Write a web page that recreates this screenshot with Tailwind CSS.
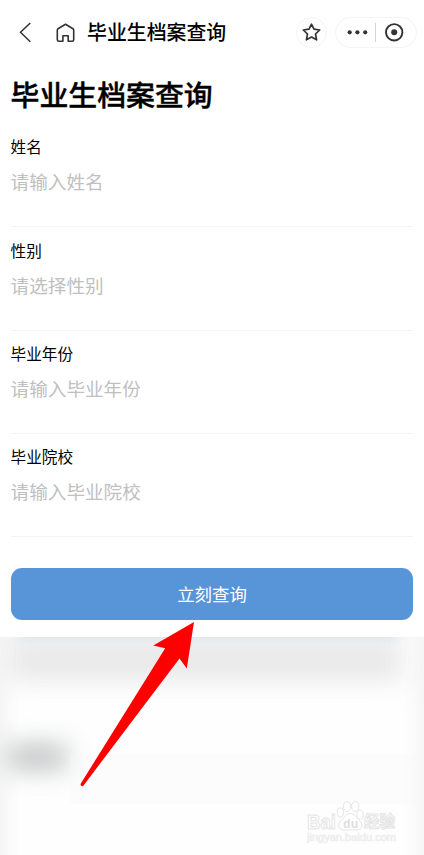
<!DOCTYPE html>
<html lang="zh-CN">
<head>
<meta charset="utf-8">
<title>毕业生档案查询</title>
<script src="https://cdn.jsdelivr.net/npm/@tailwindcss/browser@4"></script>
</head>
<body class="bg-white font-['Noto_Sans_CJK_SC',sans-serif]">
<div class="relative flex h-[855px] w-[424px] flex-col overflow-hidden bg-white text-black">
  <header class="flex h-16 shrink-0 items-center pl-[18px] pr-[7px]">
    <svg class="h-6 w-4 shrink-0" viewBox="0 0 16 24" fill="none" stroke="#333" stroke-width="1.5"><path d="M12.3 3 2.5 12.3 12.3 21.7"/></svg>
    <svg class="ml-[21px] h-6 w-[22px] shrink-0" viewBox="0 0 22 24" fill="none" stroke="#333" stroke-width="1.6" stroke-linejoin="round"><path d="M2.300 19.700V10.200Q2.300 9.300 3 8.700L10.500 4.300 18 8.700Q18.700 9.300 18.700 10.200V19.700Q18.700 21.200 17.200 21.200H13.200V15.700H7.900V21.200H3.800Q2.300 21.200 2.300 19.700Z"/></svg>
    <h1 class="ml-2.5 text-[19.900px] font-medium leading-none whitespace-nowrap">毕业生档案查询</h1>
    <div class="ml-auto flex size-[31px] shrink-0 items-center justify-center rounded-full border border-[#f4f4f4]">
      <svg class="size-5" viewBox="0 0 20 20" fill="none" stroke="#333" stroke-width="1.7" stroke-linejoin="round"><path d="M9.500 2.200 12 7.200 17.700 8 13.500 12 14.600 17.800 9.500 15 4.400 17.800 5.500 12 1.300 8 7 7.200Z"/></svg>
    </div>
    <div class="ml-2 flex h-[31px] w-[82px] shrink-0 items-center rounded-full border border-[#f4f4f4]">
      <svg class="h-5 w-[39px]" viewBox="0 0 39 20" fill="#333"><circle cx="13.700" cy="10.300" r="2.100"/><circle cx="21.400" cy="10.300" r="2.100"/><circle cx="29.200" cy="10.300" r="2.100"/></svg>
      <div class="h-[19px] w-px bg-[#d5d5d5]"></div>
      <svg class="ml-2 size-5" viewBox="0 0 20 20"><circle cx="10.200" cy="10.300" r="8.200" fill="none" stroke="#333" stroke-width="1.900"/><circle cx="10.200" cy="10.300" r="3" fill="#333"/></svg>
    </div>
  </header>

  <main class="h-[573px] shrink-0 px-[11px]">
    <h2 class="-ml-[0.500px] h-[60px] text-[28.900px] font-medium leading-[58px] whitespace-nowrap [-webkit-text-stroke:0.4px_#000]">毕业生档案查询</h2>
    <form>
      <div class="h-[103.300px] border-b border-[#f4f4f4] pt-2.5">
        <div class="-ml-[0.400px] text-[15.600px] leading-6">姓名</div>
        <div class="-ml-[0.400px] mt-2 text-[18.600px] leading-[30px] text-[#c0c0c0]">请输入姓名</div>
      </div>
      <div class="h-[103.300px] border-b border-[#f4f4f4] pt-[10.700px]">
        <div class="-ml-[0.400px] text-[15.600px] leading-6">性别</div>
        <div class="-ml-[0.400px] mt-2 text-[18.600px] leading-[30px] text-[#c0c0c0]">请选择性别</div>
      </div>
      <div class="h-[103.300px] border-b border-[#f4f4f4] pt-[10.400px]">
        <div class="-ml-[0.400px] text-[15.600px] leading-6">毕业年份</div>
        <div class="-ml-[0.400px] mt-2 text-[18.600px] leading-[30px] text-[#c0c0c0]">请输入毕业年份</div>
      </div>
      <div class="h-[103.300px] border-b border-[#f4f4f4] pt-[10.100px]">
        <div class="-ml-[0.400px] text-[15.600px] leading-6">毕业院校</div>
        <div class="-ml-[0.400px] mt-2 text-[18.600px] leading-[30px] text-[#c0c0c0]">请输入毕业院校</div>
      </div>
      <button type="button" class="mt-[31px] block h-[52px] w-full rounded-[11px] bg-[#5894d8] pb-px text-[17.400px] leading-[51px] text-white">立刻查询</button>
    </form>
  </main>

  <section class="relative h-[218px] shrink-0 overflow-hidden bg-[linear-gradient(to_right,#f6f6f6,#fefefe_20px,#fefefe_404px,#f6f6f6)]">
    <div class="absolute -top-8 left-0 h-[76px] w-[404px] bg-[#f0f0f0] blur-[13px]"></div>
    <div class="absolute top-[18px] left-5 h-[18px] w-[374px] bg-[#e4e4e4]/80 blur-[11px]"></div>
    <div class="absolute -top-2 left-5 h-2.5 w-[380px] bg-[#d9e3f0]/80 blur-[4px]"></div>
    <div class="absolute top-[108px] left-[7px] h-[24px] w-[60px] bg-[#bcc0c0] blur-[13px]"></div>
    <div class="absolute top-[117px] left-[70px] h-[50px] w-[354px] bg-[#f8f8f8]/30"></div>

    <svg class="absolute left-[304px] top-[161px] h-[50px] w-[96px]" viewBox="0 0 96 50" fill="#fff" stroke="#e5e5e5" stroke-width="1">
      <text x="3" y="31" textLength="29" lengthAdjust="spacingAndGlyphs" font-family="Liberation Sans" font-weight="700" font-size="20">Bai</text>
      <ellipse cx="36.500" cy="14.500" rx="3.200" ry="4.500"/><ellipse cx="43" cy="8.500" rx="3.600" ry="5"/><ellipse cx="51.200" cy="8.500" rx="3.600" ry="5"/><ellipse cx="56" cy="16.500" rx="3.200" ry="4.500"/>
      <path d="M46.500 15.500C50.500 15.500 52 19 54.500 21.500C60 26 58.500 32 52.500 32H40C34 32 33 26 37.500 22C40.500 19 42.500 15.500 46.500 15.500Z"/>
      <text x="39" y="29.500" font-family="Liberation Sans" font-weight="700" font-size="12.500" fill="#e0e0e0" stroke="none">du</text>
      <text x="60" y="29" textLength="31" font-family="Noto Sans CJK SC" font-weight="700" font-size="15.500" stroke="#e5e5e5">经验</text>
      <text x="3" y="43" textLength="89" lengthAdjust="spacingAndGlyphs" font-family="Liberation Sans" font-size="10" fill="#f3f3f3" stroke="#eeeeee" stroke-width=".7">jingyan.baidu.com</text>
    </svg>
  </section>

  <svg class="absolute left-[76px] top-[618px] h-[172px] w-[122px]" viewBox="76 618 122 172" fill="#f00"><path d="M194 622 153.300 645.600 165.200 648.200 80.500 784Q80.500 786.500 83 786.200L179.500 658.500 186.800 668.500Z"/></svg>
</div>
</body>
</html>
